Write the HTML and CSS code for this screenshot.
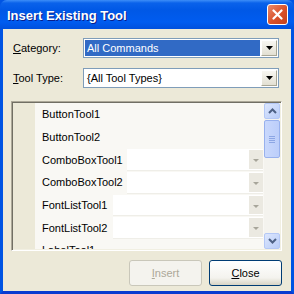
FILE: index.html
```html
<!doctype html>
<html lang="en">
  <head>
    <meta charset="UTF-8" />
    <title>Insert Existing Tool</title>
    <link rel="stylesheet" href="styles.css">
  </head>
  <body>
    <div class="window">
      <div class="titlebar">
        <span class="title">Insert Existing Tool</span>
        <button class="close-x" aria-label="Close">
          <svg width="11" height="11" viewBox="0 0 11 11">
            <path d="M1.5 1.5 L9.5 9.5 M9.5 1.5 L1.5 9.5" stroke="#fff" stroke-width="2.2" stroke-linecap="round" />
          </svg>
        </button>
      </div>

      <div class="client">
        <div class="form-row">
          <label><u>C</u>ategory:</label>
          <div class="combo">
            <span class="combo-text selected">All Commands</span>
            <span class="combo-btn">
              <svg width="7" height="4" viewBox="0 0 7 4"><path d="M0 0 H7 L3.5 4 Z" fill="#000" /></svg>
            </span>
          </div>
        </div>
        <div class="form-row">
          <label><u>T</u>ool Type:</label>
          <div class="combo">
            <span class="combo-text">{All Tool Types}</span>
            <span class="combo-btn">
              <svg width="7" height="4" viewBox="0 0 7 4"><path d="M0 0 H7 L3.5 4 Z" fill="#000" /></svg>
            </span>
          </div>
        </div>

        <div class="listbox">
          <div class="gutter"></div>
          <div class="rows">
            <div class="row"><span class="name">ButtonTool1</span></div>
            <div class="row"><span class="name">ButtonTool2</span></div>
            <div class="row"><span class="name">ComboBoxTool1</span><span class="preview combo-preview"><span class="drop"></span></span></div>
            <div class="row"><span class="name">ComboBoxTool2</span><span class="preview combo-preview"><span class="drop"></span></span></div>
            <div class="row"><span class="name">FontListTool1</span><span class="preview font-preview"><span class="drop"></span></span></div>
            <div class="row"><span class="name">FontListTool2</span><span class="preview font-preview"><span class="drop"></span></span></div>
            <div class="row"><span class="name">LabelTool1</span></div>
          </div>
          <div class="scrollbar">
            <div class="sb-btn">
              <svg width="9" height="6" viewBox="0 0 9 6"><path d="M1 5 L4.5 1.5 L8 5" fill="none" stroke="#4d6185" stroke-width="2" /></svg>
            </div>
            <div class="sb-thumb">
              <span></span><span></span><span></span><span></span>
            </div>
            <div class="sb-track"></div>
            <div class="sb-btn">
              <svg width="9" height="6" viewBox="0 0 9 6"><path d="M1 1 L4.5 4.5 L8 1" fill="none" stroke="#4d6185" stroke-width="2" /></svg>
            </div>
          </div>
        </div>

        <div class="buttons">
          <button class="btn" disabled><u>I</u>nsert</button>
          <button class="btn"><u>C</u>lose</button>
        </div>
      </div>
    </div>
  </body>
</html>
```

FILE: styles.css
```css
body {
  margin: 0;
  font-family: "Liberation Sans", Arial, sans-serif;
  font-size: 11px;
}

.window {
  width: 294px;
  height: 294px;
  box-sizing: border-box;
  display: flex;
  flex-direction: column;
  background-color: #0054e3;
  border: 3px solid #0054e3;
  border-top: none;
  border-bottom-color: #0a3ad0;
}

.titlebar {
  height: 29px;
  margin: 0 -3px;
  padding: 0 6px 0 7px;
  display: flex;
  align-items: center;
  justify-content: space-between;
  background: linear-gradient(to bottom, #3d8ef8 0, #0a62ea 3px, #0058e6 10px, #005cf0 22px, #0050dd 29px);
  border-radius: 7px 7px 0 0;
}

.title {
  color: white;
  font-weight: bold;
  font-size: 13px;
  text-shadow: 1px 1px #0a1e8a;
  padding-top: 1px;
}

.close-x {
  width: 21px;
  height: 21px;
  padding: 0;
  display: flex;
  align-items: center;
  justify-content: center;
  border: 1px solid white;
  border-radius: 3px;
  background: linear-gradient(to bottom right, #e98a6b, #d9502a 55%, #c2411e);
}

.client {
  flex: 1;
  background-color: #ece9d8;
  padding: 9px 9px 5px 8px;
  display: flex;
  flex-direction: column;
}

.form-row {
  display: flex;
  align-items: center;
  padding: 0 3px 0 2px;
  margin-bottom: 10px;
}

.form-row label {
  width: 70px;
  color: #000;
}

.combo {
  width: 196px;
  height: 20px;
  box-sizing: border-box;
  border: 1px solid #7f9db9;
  background-color: white;
  display: flex;
  padding: 1px;
}

.combo-text {
  flex: 1;
  padding-left: 2px;
  line-height: 16px;
  color: #000;
}

.combo-text.selected {
  background-color: #316ac5;
  color: white;
}

.combo-btn {
  width: 16px;
  margin-left: 1px;
  box-sizing: border-box;
  display: flex;
  align-items: center;
  justify-content: center;
  background: linear-gradient(to bottom, #f8f7f2, #e3e0d3);
  border: 1px solid;
  border-color: #fff #a9a795 #a9a795 #fff;
}

.listbox {
  height: 150px;
  margin-top: 3px;
  box-sizing: border-box;
  display: flex;
  border: 1px solid;
  border-color: #aca899 #fff #fff #aca899;
  box-shadow: inset 1px 1px #716f64, inset -1px -1px #f1efe2;
  padding: 1px;
  background-color: #f8f7f2;
}

.gutter {
  width: 22px;
  background-color: #ece9d8;
}

.rows {
  flex: 1;
  overflow: hidden;
  background-color: #f9f8f4;
  padding-top: 0;
}

.row {
  height: 22.7px;
  display: flex;
  align-items: center;
  position: relative;
}

.name {
  padding-left: 7px;
  color: #000;
}

.preview {
  position: absolute;
  right: 1px;
  top: 1px;
  bottom: 0;
  background-color: white;
  border-bottom: 1px solid #efeee8;
  display: flex;
  justify-content: flex-end;
}

.combo-preview {
  left: 92px;
}

.font-preview {
  left: 78px;
}

.drop {
  width: 14px;
  margin: 1px 0;
  background-color: #ebe9e1;
  position: relative;
}

.drop::after {
  content: "";
  position: absolute;
  left: 4px;
  top: 9px;
  border-left: 3px solid transparent;
  border-right: 3px solid transparent;
  border-top: 3px solid #a7a59a;
}

.scrollbar {
  width: 16px;
  display: flex;
  flex-direction: column;
  background-color: #f4f3ee;
}

.sb-btn {
  height: 16px;
  box-sizing: border-box;
  display: flex;
  align-items: center;
  justify-content: center;
  background: linear-gradient(to bottom right, #dce6fd, #b9cdf8);
  border: 1px solid #b4c8f6;
  border-radius: 2px;
}

.sb-thumb {
  height: 38px;
  margin-top: 1px;
  box-sizing: border-box;
  display: flex;
  flex-direction: column;
  align-items: center;
  justify-content: center;
  gap: 1px;
  background: linear-gradient(to right, #c9d8fc, #bccefa);
  border: 1px solid #98b1ed;
  border-radius: 2px;
}

.sb-thumb span {
  width: 6px;
  height: 1px;
  background-color: #8ca6e4;
}

.sb-track {
  flex: 1;
}

.buttons {
  margin-top: 9px;
  display: flex;
  justify-content: flex-end;
  gap: 7px;
  padding-right: 0;
}

.btn {
  width: 73px;
  height: 26px;
  font-family: "Liberation Sans", Arial, sans-serif;
  font-size: 11px;
  color: #000;
  background: linear-gradient(to bottom, #fff, #f4f3ee 70%, #d8d4c5);
  border: 1px solid #003c74;
  border-radius: 3px;
}

.btn:disabled {
  color: #aca899;
  background: #f4f3ee;
  border-color: #c9c7ba;
}
```
